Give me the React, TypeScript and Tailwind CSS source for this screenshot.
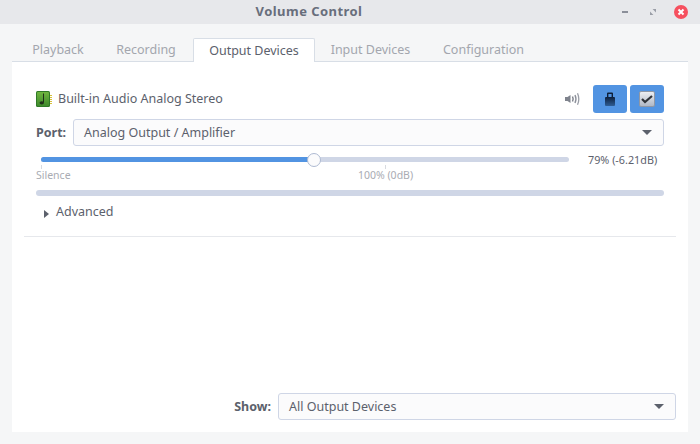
const font = { fontFamily: '"Noto Sans", sans-serif' };

function Tab({ label, active, className }: { label: string; active?: boolean; className: string }) {
  return (
    <div
      className={
        active
          ? `flex h-[24px] items-center justify-center rounded-t-[2px] border border-b-0 border-[#d8dee6] bg-white pt-[1px] text-[#5c616c] -mb-px z-10 ${className}`
          : `flex h-[23px] items-center justify-center pt-[2px] text-[#a3a6ae] ${className}`
      }
    >
      {label}
    </div>
  );
}

function Select({ label, className }: { label: string; className: string }) {
  return (
    <div className={`flex h-[27px] items-center justify-between rounded-[3px] border border-[#cfd6e6] bg-[#fbfbfc] pl-[10px] pr-[11px] text-[#5c616c] ${className}`}>
      <span className="pt-[1px]">{label}</span>
      <span className="h-0 w-0 border-x-[5px] border-t-[5px] border-x-transparent border-t-[#5c616c]" />
    </div>
  );
}

function ChipIcon() {
  return (
    <svg width="16" height="16" viewBox="0 0 16 16">
      <defs>
        <linearGradient id="chip" x1="0" y1="0" x2="0" y2="1">
          <stop offset="0" stopColor="#6fb53f" />
          <stop offset="1" stopColor="#3f8a2c" />
        </linearGradient>
      </defs>
      <rect x="0" y="0" width="14" height="16" rx="1.5" fill="#2f7a26" />
      <rect x="1" y="1" width="12" height="14" rx="1" fill="url(#chip)" />
      <path d="M14 4h2v1h-2zM14 6h2v1h-2zM14 8h2v1h-2zM14 10h2v1h-2zM14 12h2v1h-2z" fill="#d6c13c" />
      <path d="M7.5 2.5v9" stroke="#20301a" strokeWidth="1" />
      <ellipse cx="5.8" cy="11.8" rx="2.2" ry="1.6" fill="#20301a" />
    </svg>
  );
}

function SpeakerIcon() {
  return (
    <svg className="mr-[13px]" width="15" height="14" viewBox="0 0 15 14">
      <path d="M0 5h2.5L5.5 3v8L2.5 9H0z" fill="#7f838d" />
      <path d="M7.5 4.5q1.3 2.5 0 5" fill="none" stroke="#7f838d" strokeWidth="1.5" />
      <path d="M10 3q1.9 4 0 8" fill="none" stroke="#8b8f99" strokeWidth="1.4" />
      <path d="M12.5 1.2q2.6 5.8 0 11.6" fill="none" stroke="#9a9ea7" strokeWidth="1.3" />
    </svg>
  );
}

function LockIcon() {
  return (
    <svg width="10" height="14" viewBox="0 0 10 14" className="mb-[1px]">
      <defs>
        <linearGradient id="lock" x1="0" y1="0" x2="0" y2="1">
          <stop offset="0" stopColor="#0c1f3c" />
          <stop offset="1" stopColor="#2f5d94" />
        </linearGradient>
      </defs>
      <path d="M2 6V1.5a1 1 0 0 1 1-1h4a1 1 0 0 1 1 1V6H6.6V2H3.4v4z" fill="#0e1f38" />
      <rect x="0" y="5" width="10" height="9" rx="1" fill="url(#lock)" />
    </svg>
  );
}

function CheckIcon() {
  return (
    <svg width="16" height="16" viewBox="0 0 16 16">
      <defs>
        <linearGradient id="box" x1="0" y1="0" x2="0" y2="1">
          <stop offset="0" stopColor="#eef0f3" />
          <stop offset="1" stopColor="#aeb6c4" />
        </linearGradient>
      </defs>
      <rect x="0.5" y="0.5" width="15" height="15" rx="1.5" fill="url(#box)" stroke="#8f97a5" />
      <path d="M3 8l3 3 7-6" fill="none" stroke="#2e3238" strokeWidth="2.2" />
    </svg>
  );
}

export default function App() {
  return (
    <div className="flex h-[444px] w-[700px] flex-col overflow-hidden bg-[#f5f6f7] text-[12.5px]" style={font}>
      <header className="relative flex h-[24px] shrink-0 items-center justify-center bg-[#e7e8eb] pr-[82px] text-[13px] font-bold tracking-[0.45px] text-[#686e7c]">
        Volume Control
        <div className="absolute inset-y-0 right-0 flex items-center">
          <span className="mr-[22px] h-[2px] w-[6px] bg-[#8b8f99]" />
          <svg className="mr-[18px]" width="6" height="6" viewBox="0 0 7 7">
            <path d="M3 0h4v4zM0 3l4 4H0z" fill="#9a9ea7" />
          </svg>
          <span className="mr-[12px] flex h-[14px] w-[14px] items-center justify-center rounded-full bg-[#f6505f]">
            <svg width="8" height="8" viewBox="0 0 8 8">
              <path d="M1.5 1.5l5 5M6.5 1.5l-5 5" stroke="#fff" strokeWidth="2" />
            </svg>
          </span>
        </div>
      </header>

      <div className="flex flex-1 flex-col pl-[12px] pr-[12px] pb-[12px] pt-[14px]">
        <nav className="flex h-[23px] pl-[8px]">
          <Tab label="Playback" className="w-[76px]" />
          <Tab label="Recording" className="w-[74px] ml-[13px]" />
          <Tab label="Output Devices" active className="w-[122px] ml-[10px]" />
          <Tab label="Input Devices" className="w-[111px]" />
          <Tab label="Configuration" className="w-[115px]" />
        </nav>

        <main className="flex flex-1 flex-col border-t border-[#d8dee6] bg-white">
          <section className="mx-[12px] flex flex-col border-b border-[#e6e8ec] pl-[12px] pr-[12px] h-[175px]">
            <div className="mt-[21px] flex h-[32px] items-center text-[#5c616c]">
              <ChipIcon />
              <span className="ml-[6px] flex-1">Built-in Audio Analog Stereo</span>
              <SpeakerIcon />
              <span className="flex h-[28px] w-[34px] items-center justify-center rounded-[3px] bg-[#5294e2]">
                <LockIcon />
              </span>
              <span className="ml-[3px] flex h-[28px] w-[34px] items-center justify-center rounded-[3px] bg-[#5294e2]">
                <CheckIcon />
              </span>
            </div>

            <div className="mt-[4px] flex items-center">
              <span className="w-[37px] pt-[1px] font-bold text-[#5c616c]">Port:</span>
              <Select label="Analog Output / Amplifier" className="flex-1" />
            </div>

            <div className="mt-[6px] flex items-start">
              <div className="w-[533px] shrink-0 pl-[5px]">
                <div className="relative mt-[5px] h-[5px] rounded-full bg-[#cfd6e6]">
                  <div className="h-full w-[273px] rounded-full bg-[#5294e2]" />
                  <div className="absolute left-[266px] top-[-4.5px] h-[14px] w-[14px] rounded-full border border-[#aebad2] bg-[#fbfbfc]" />
                </div>
                <div className="relative mt-[3px] h-[19px] text-[10.5px] text-[#a9acb3]">
                  <span className="absolute left-[-5px] top-[3px]">Silence</span>
                  <span className="absolute left-[317px] top-[3px]">100% (0dB)</span>
                  <span className="absolute left-0 top-0 h-[4px] w-px bg-[#d8dbe0]" />
                  <span className="absolute left-[344px] top-0 h-[4px] w-px bg-[#d8dbe0]" />
                </div>
              </div>
              <span className="ml-[19px] text-[10.8px] leading-[15px] whitespace-nowrap text-[#5c616c]">79% (-6.21dB)</span>
            </div>

            <div className="mt-[6px] h-[6px] rounded-full bg-[#cfd6e6]" />

            <div className="mt-[7px] flex h-[18px] items-center pl-[8px] text-[#5c616c]">
              <span className="mt-[3px] h-0 w-0 border-y-[4.5px] border-l-[5px] border-y-transparent border-l-[#5c616c]" />
              <span className="ml-[7px]">Advanced</span>
            </div>
          </section>

          <div className="mt-auto mb-[12px] mr-[12px] flex items-center justify-end">
            <span className="mr-[7px] pt-[1px] font-bold text-[#5c616c]">Show:</span>
            <Select label="All Output Devices" className="w-[398px]" />
          </div>
        </main>
      </div>
    </div>
  );
}
